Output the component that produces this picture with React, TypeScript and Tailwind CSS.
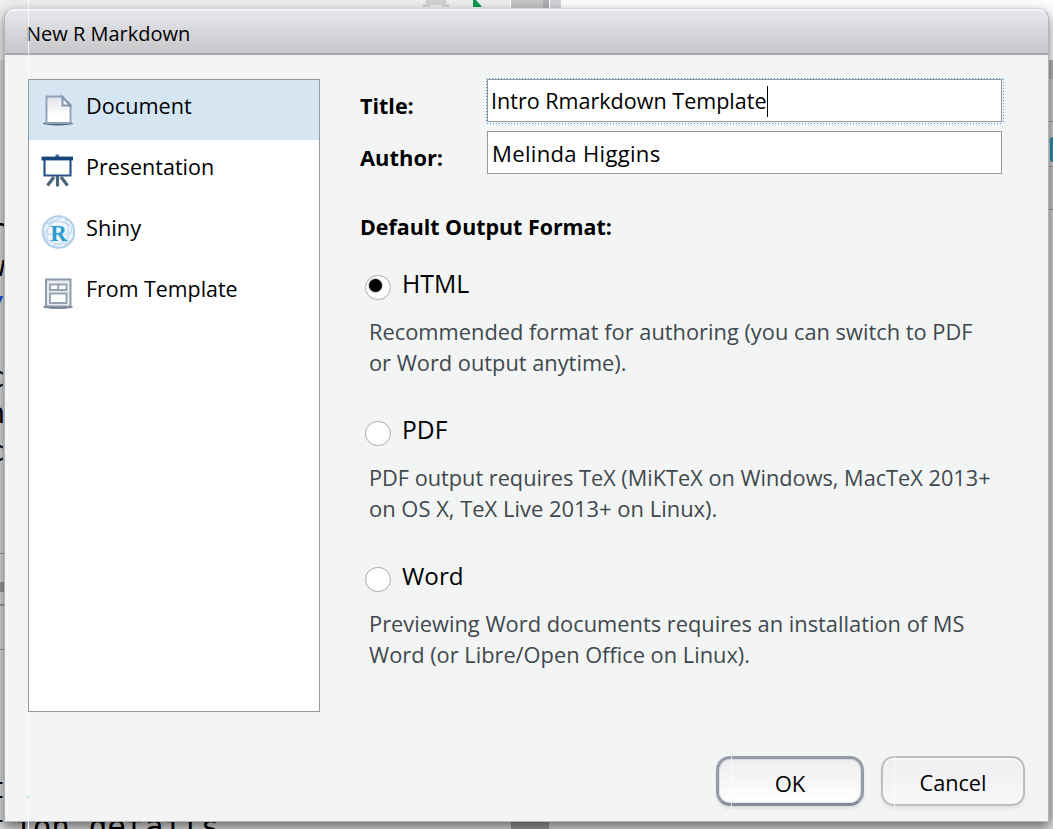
import React from "react";

const T = ({ c, children }: { c: string; children: React.ReactNode }) => (
  <span className={"block whitespace-nowrap leading-[22px] " + c}>{children}</span>
);

function DocIcon() {
  return (
    <svg className="shrink-0" width="34" height="36" viewBox="0 0 34 36">
      <defs>
        <linearGradient id="doc" x1="0" y1="0" x2="0" y2="1">
          <stop offset="0" stopColor="#dfe2e7" />
          <stop offset=".7" stopColor="#fff" />
        </linearGradient>
        <filter id="soft" x="-20%" y="-100%" width="140%" height="300%">
          <feGaussianBlur stdDeviation=".7" />
        </filter>
      </defs>
      <ellipse cx="17" cy="31.500" rx="15" ry="1.900" fill="#55667d" filter="url(#soft)" />
      <path d="M5.500 4.500H21L29.500 13V31H5.500Z" fill="url(#doc)" stroke="#8fa1b5" strokeWidth="1.900" />
      <path d="M21.500 5V13.500H29.500Z" fill="#f2f4f6" stroke="#8496ab" strokeWidth="1.900" />
    </svg>
  );
}

function PresentationIcon() {
  return (
    <svg className="shrink-0" width="34" height="36" viewBox="0 0 34 36">
      <path d="M16.500 23V33.500M13 24L6.500 32.500M20 24L26.500 32.500" stroke="#4b637b" strokeWidth="3.200" />
      <path d="M14.500 1.500h3.500v3h-3.500z" fill="#547196" />
      <path d="M3.500 7V22.500H29.500V7" fill="#fcfcfd" stroke="#2b5485" strokeWidth="2.200" />
      <path d="M.5 5.500H32" stroke="#16457d" strokeWidth="3.800" />
    </svg>
  );
}

function ShinyIcon() {
  return (
    <svg className="shrink-0" width="34" height="36" viewBox="0 0 34 36">
      <circle cx="17.500" cy="18" r="15.800" fill="#f0f6fb" stroke="#b0cee8" strokeWidth="2" />
      <path d="M4 11Q15 3 30 12M3 23Q8 6 23 3M7 28Q3 15 13 3M12 32Q29 28 31 12M4 23Q16 36 30 26M23 3Q31 15 24 31M2 17Q14 25 33 18" fill="none" stroke="#c3dbee" strokeWidth="1.300" />
      <text x="17.500" y="26.500" textAnchor="middle" fontFamily="Liberation Serif, serif" fontWeight="700" fontSize="23" fill="#2c9bcf">R</text>
    </svg>
  );
}

function TemplateIcon() {
  return (
    <svg className="shrink-0" width="34" height="36" viewBox="0 0 34 36">
      <ellipse cx="17" cy="32" rx="15" ry="1.800" fill="#5f6d80" filter="url(#soft)" />
      <path d="M5 4.500H29.500V31.500H5Z" fill="#e8ebef" stroke="#8c98a8" strokeWidth="1.900" />
      <path d="M9 9.500H25.500V15H9ZM17.200 9.500V15M9 18.500H25.500V28H9Z" fill="#fff" stroke="#97a3b3" strokeWidth="1.900" />
    </svg>
  );
}

const items = [
  { name: "Document", icon: <DocIcon />, c: "text-[21.7px]" },
  { name: "Presentation", icon: <PresentationIcon />, c: "text-[21.5px]" },
  { name: "Shiny", icon: <ShinyIcon />, c: "text-[21.8px]" },
  { name: "From Template", icon: <TemplateIcon />, c: "text-[21.4px]" },
];

const formats = [
  {
    name: "HTML", c: "pl-[11px] text-[24.8px]", on: true,
    lines: [
      ["Recommended format for authoring (you can switch to PDF", "text-[21.83px]"],
      ["or Word output anytime).", "text-[21.8px]"],
    ],
  },
  {
    name: "PDF", c: "pl-[11px] text-[24.6px]", on: false,
    lines: [
      ["PDF output requires TeX (MiKTeX on Windows, MacTeX 2013+", "text-[21.72px]"],
      ["on OS X, TeX Live 2013+ on Linux).", "text-[21.95px]"],
    ],
  },
  {
    name: "Word", c: "pl-[11px] text-[24.2px]", on: false,
    lines: [
      ["Previewing Word documents requires an installation of MS", "text-[21.85px]"],
      ["Word (or Libre/Open Office on Linux).", "text-[21.8px]"],
    ],
  },
];

/* Rows of the editor's left edge: each holds the end of a code line or a divider. */
const gutter = [
  { text: "r", c: "mt-[156px] h-[28px]" },
  { text: "w", c: "mt-[9px] h-[28px]" },
  { text: "/", c: "mt-[13px] h-[28px] text-blue-700" },
  { text: "c", c: "mt-[42px] h-[28px]" },
  { text: "h", c: "mt-[8px] h-[28px]" },
  { text: "c", c: "mt-[10px] h-[28px]" },
  { text: "", c: "mt-[87px] h-px bg-[#999]" },
  { text: "", c: "mt-[28px] h-[10px] bg-[#999]" },
  { text: "", c: "mt-[12px] h-[2px] bg-[#999]" },
  { text: "", c: "mt-[43px] h-px bg-[#999]" },
  { text: "t", c: "mt-[125px] h-[28px]" },
  { text: "t", c: "mt-[10px] h-[28px]" },
];

/* Sliver of the editor window that stays visible around the dialog. */
function Backdrop() {
  return (
    <div aria-hidden="true" className="absolute inset-0 flex flex-col overflow-hidden bg-[#d8d8d9]">
      <div className="flex h-[60px] shrink-0 bg-[#ededed] pl-[423px]">
        <svg width="26" height="8"><path d="M3 0H23V4H26V7H19V5H7V7H0V4H3Z" fill="#d0d1d0" /></svg>
        <svg className="ml-6" width="10" height="8"><path d="M0 0H3L9 7H0Z" fill="#0e9b50" /></svg>
        <div className="ml-[27px] w-[33px] border-l border-white bg-[#c4c4c4]" />
        <div className="w-[7px] border-r border-white bg-[#adadb1]" />
        <div className="w-[11px] bg-[#d0d1d5]" />
        <div className="grow bg-[#fcfcfc]" />
      </div>
      <div className="flex h-[760px] shrink-0 justify-between">
        <div className="w-1">
          {gutter.map((g, n) => (
            <div key={n} className={"flex w-1 justify-end font-['DejaVu_Sans_Mono',monospace] text-[28px] leading-none " + g.c}>
              <span className="translate-x-px">{g.text}</span>
            </div>
          ))}
        </div>
        <div className="flex w-2 flex-col items-end bg-[#cfcfcf]">
          <div className="h-[19px] w-2 bg-[#b2b2b4]" />
          <div className="h-[43px] w-2 border-b border-[#999] bg-[#cacaca]" />
          <div className="mt-[15px] h-[25px] w-[3px] rounded-l bg-[#228fae]" />
          <div className="mt-1 h-[44px] w-2 border-y border-[#999] bg-[#c6c6c6]" />
        </div>
      </div>
      <div className="flex h-[9px] shrink-0 pl-[14px]">
        <span className="-mt-[9px] w-[497px] whitespace-pre font-['DejaVu_Sans_Mono',monospace] text-[31px] leading-none">ion details</span>
        <div className="w-[38px] bg-[#999]" />
      </div>
    </div>
  );
}

export default function App() {
  return (
    <div className="relative h-[829px] w-[1053px] overflow-hidden pl-1 pt-2 font-['Open_Sans',sans-serif] text-black">
      <Backdrop />
      <main className="relative flex h-[814px] w-[1045px] flex-col rounded-t-[11px] border border-[#b3b4bb] border-t-[#d5d6d9] bg-[#f3f5f5] shadow-[0_5px_12px_rgba(0,0,0,0.5)]">
        <header className="flex h-[46px] shrink-0 items-center rounded-t-[10px] border-b-2 border-t-2 border-b-[#a5a6ab] border-t-[#f5f5f7] bg-linear-to-b from-[#e6e7eb] to-[#c8c8cb] pl-[21px] pt-1">
          <T c="text-[20px]">New R Markdown</T>
        </header>
        <div className="flex pl-[23px] pt-6">
          <nav className="flex h-[633px] w-[292px] flex-col gap-px border border-[#97989a] bg-white">
            {items.map((i, n) => (
              <div key={i.name} className={"flex h-[60px] gap-[11px] pl-3 " + (n === 0 ? "bg-[#d6e5f2]" : "")}>
                <div className="pt-3">{i.icon}</div>
                <div className="pt-[15px]"><T c={i.c}>{i.name}</T></div>
              </div>
            ))}
          </nav>
          <section className="flex flex-col pl-10">
            <div className="flex h-[52px]">
              <div className="w-[127px] pt-4 font-bold"><T c="text-[21.5px]">Title:</T></div>
              <div className="relative flex h-[43px] w-[515px] items-center border border-[#97979b] bg-white pl-[3px] pt-px">
                <T c="text-[21.55px]">Intro Rmarkdown Template</T>
                <span className="h-[31px] w-px bg-black" />
                <svg className="absolute -left-[2px] -top-[2px]" width="518" height="47">
                  <path d="M0 .5H517M.5 0V45M517.500 1V46M1 45.500H517" fill="none" stroke="#399af3" strokeWidth="1" strokeDasharray="1 2" shapeRendering="crispEdges" />
                </svg>
              </div>
            </div>
            <div className="flex h-[52px]">
              <div className="w-[127px] pt-4 font-bold"><T c="text-[21.9px]">Author:</T></div>
              <div className="flex h-[43px] w-[515px] items-center border border-[#97979b] bg-white pl-[4px]">
                <T c="text-[22.1px] tracking-[0.3px]">Melinda Higgins</T>
              </div>
            </div>
            <h2 className="h-[77px] pt-[33px] font-bold"><T c="text-[21.4px]">Default Output Format:</T></h2>
            {formats.map((f) => (
              <div key={f.name} className="h-[146px] pt-[15px]">
                <div className="flex h-[46px] pl-[5px]">
                  <span className="h-[25px] w-[26px] rounded-full border border-[#aaa] bg-white pl-[3px] pt-[3px]">
                    {f.on && <span className="block size-[13px] rounded-full bg-black shadow-[0_0_2px_#555]" />}
                  </span>
                  <div className={f.on ? "-mt-[3px]" : "-mt-[2px]"}><T c={f.c}>{f.name}</T></div>
                </div>
                <div className="flex flex-col gap-[9px] pl-[9px] text-[#3f484d]">
                  {f.lines.map((l) => <T key={l[0]} c={l[1]}>{l[0]}</T>)}
                </div>
              </div>
            ))}
          </section>
        </div>
        <div className="mt-11 flex justify-end gap-[17px] pr-[23px]">
          <div className="flex h-[50px] w-[148px] items-center justify-center rounded-[14px] border-3 border-[#959ca8] border-b-[#858b98] bg-linear-to-b from-[#eeeef1] to-white pt-[3px] shadow-[0_3px_3px_rgba(0,0,0,0.08),inset_0_0_2px_#a5a9b3]">
            <T c="text-[22px]">OK</T>
          </div>
          <div className="flex h-[50px] w-[144px] items-center justify-center rounded-[13px] border-2 border-[#bcbdc1] bg-linear-to-b from-[#eeeef1] to-[#f8f8fa] pt-[3px] shadow-[0_3px_3px_rgba(0,0,0,0.07),inset_0_2px_1px_#fafafa]">
            <T c="text-[21.7px]">Cancel</T>
          </div>
        </div>
      </main>
      <svg className="absolute inset-0" width="1053" height="829" shapeRendering="crispEdges">
        <path d="M28.500 0V79M731.500 756V811M894.500 756V811" stroke="#fff" strokeOpacity=".7" />
        <path d="M28.500 712V829" stroke="#fff" />
        <path d="M28.500 796V798" stroke="#60e0f8" />
      </svg>
    </div>
  );
}
